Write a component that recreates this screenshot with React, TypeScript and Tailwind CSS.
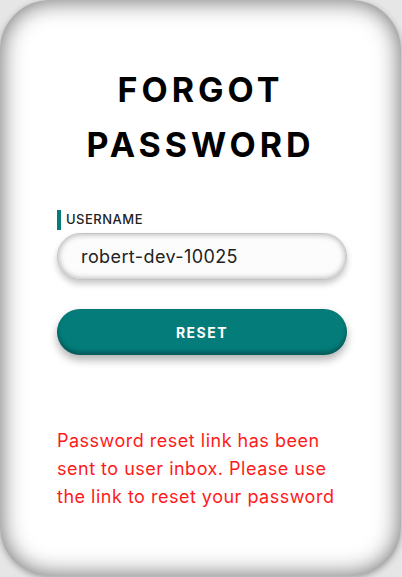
import React from "react";

const font = { fontFamily: "Inter, 'Noto Sans', sans-serif" };

const ForgotPassword: React.FC = () => {
  return (
    <div className="w-[402px] h-[577px] bg-[#e6e6e6] overflow-hidden" style={font}>
      <div className="w-[401px] h-[576px] rounded-[50px] bg-white shadow-[inset_0_0_24px_rgba(0,0,0,0.62),0_2px_6px_rgba(0,0,0,0.3)] flex flex-col px-[57px] pt-[62px]">
        <h1 className="text-center text-[34px] leading-[55px] font-bold tracking-[4px] text-black">
          FORGOT
          <br />
          PASSWORD
        </h1>

        <div className="mt-[38px] flex items-center gap-[5px] h-[20px]">
          <span className="w-[4px] h-[20px] bg-[#047c7a]" />
          <label className="text-[13px] font-medium tracking-[0.5px] text-[#222]">
            USERNAME
          </label>
        </div>

        <input
          type="text"
          defaultValue="robert-dev-10025"
          className="mt-[3px] w-[290px] h-[47px] rounded-full bg-[#fcfcfc] px-[23px] text-[18px] tracking-[0.4px] text-[#222] outline-none border border-[#c4c4c4] shadow-[inset_0_0_6px_rgba(0,0,0,0.35),0_4px_6px_rgba(0,0,0,0.22)]"
          style={font}
        />

        <button className="mt-[29px] w-[290px] h-[46px] rounded-full bg-[#047c7a] text-white text-[14px] font-bold tracking-[1.5px] shadow-[inset_0_-3px_4px_rgba(0,0,0,0.3),0_5px_8px_rgba(0,0,0,0.3)]">
          RESET
        </button>

        <p className="mt-[72px] text-[18px] leading-[28px] tracking-[0.5px] text-[#ff1a1a]">
          <span className="block whitespace-nowrap">Password reset link has been</span>
          <span className="block whitespace-nowrap">sent to user inbox. Please use</span>
          <span className="block whitespace-nowrap">the link to reset your password</span>
        </p>
      </div>
    </div>
  );
};

export default function App() {
  return <ForgotPassword />;
}
